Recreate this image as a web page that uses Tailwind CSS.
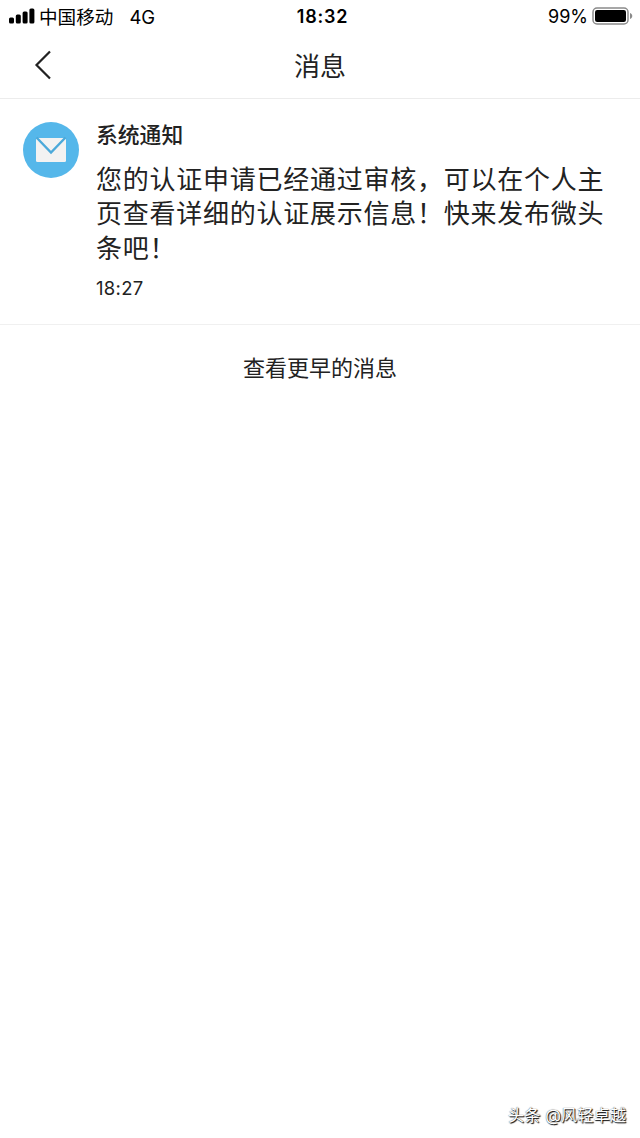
<!DOCTYPE html>
<html lang="zh-CN">
<head>
    <meta charset="UTF-8">
    <meta name="viewport" content="width=device-width, initial-scale=1.0">
    <title>消息</title>
    <script src="https://cdn.jsdelivr.net/npm/@tailwindcss/browser@4"></script>
</head>
<body class="bg-white text-[#222] font-[Inter,'Noto_Sans_CJK_SC',sans-serif]">
    <div class="w-[640px] h-[1138px] flex flex-col overflow-hidden">
        <!-- Status Bar -->
        <div class="h-8 shrink-0 grid grid-cols-3 items-center text-black text-lg leading-[30px] whitespace-nowrap">
            <div class="flex items-center pl-[9px]">
                <svg class="w-[26px] h-4 mr-1" viewBox="0 0 26 16" fill="currentColor">
                    <rect x="0" y="9.5" width="5" height="6" rx="1.5"/>
                    <rect x="6.8" y="6.5" width="5" height="9" rx="1.5"/>
                    <rect x="13.6" y="3.5" width="5" height="12" rx="1.5"/>
                    <rect x="20.4" y="0.5" width="5" height="15" rx="1.5"/>
                </svg>
                <span class="pt-px text-[18.6px]">中国移动</span>
                <span class="pt-px ml-4 text-[18.5px]">4G</span>
            </div>
            <div class="pt-0.5 text-center font-semibold tracking-[0.8px] pl-[5px]">18:32</div>
            <div class="flex items-center justify-end pr-[7px]">
                <span class="pt-0.5 mr-1">99%</span>
                <svg class="w-[41px] h-[18px]" viewBox="0 0 41 18">
                    <rect x="1" y="1" width="35" height="16" rx="4" fill="none" stroke="#8a8a8a" stroke-width="1.5"/>
                    <rect x="3" y="3" width="31" height="12" rx="2.2" fill="#000"/>
                    <path d="M38 6c3 1 3 5 0 6z" fill="#8a8a8a"/>
                </svg>
            </div>
        </div>

        <!-- Nav Bar -->
        <div class="h-[67px] shrink-0 grid grid-cols-3 items-center border-b border-[#ececec]">
            <svg class="ml-[34px] w-[18px] h-[30px]" viewBox="0 0 18 30" fill="none" stroke="#222" stroke-width="2.2">
                <path d="M16 1.5L2.5 15L16 28.5"/>
            </svg>
            <h1 class="pt-1 text-center text-[26px] leading-none">消息</h1>
        </div>

        <!-- Message -->
        <div class="h-[226px] shrink-0 flex pl-[23px] pt-[23px] border-b border-[#f0f0f0]">
            <svg class="w-14 h-14 shrink-0 mr-[17px]" viewBox="0 0 56 56">
                <circle cx="28" cy="28" r="28" fill="#55b7ea"/>
                <rect x="13" y="16" width="30" height="24" rx="1.5" fill="#f2f2f2"/>
                <path d="M13.5 15.5L28 30.5L42.5 15.5" fill="none" stroke="#4ba9da" stroke-width="2.4"/>
            </svg>
            <div class="whitespace-nowrap">
                <h2 class="text-[21.8px] leading-[26px] font-medium">系统通知</h2>
                <p class="mt-[15px] text-[26px] leading-[34.4px] tracking-[0.75px]">您的认证申请已经通过审核，可以在个人主<br>页查看详细的认证展示信息！快来发布微头<br>条吧！</p>
                <p class="mt-2.5 text-[18.5px] leading-6 tracking-[0.3px]">18:27</p>
            </div>
        </div>

        <!-- Load Earlier -->
        <div class="pt-[27px] text-center text-[22px] leading-8">查看更早的消息</div>

        <!-- Watermark -->
        <div class="mt-auto mb-[11px] pr-3.5 text-right text-[16.3px] leading-6 text-white [text-shadow:1px_1px_1px_#000,0_0_1px_#333]">头条 @风轻卓越</div>
    </div>
</body>
</html>
